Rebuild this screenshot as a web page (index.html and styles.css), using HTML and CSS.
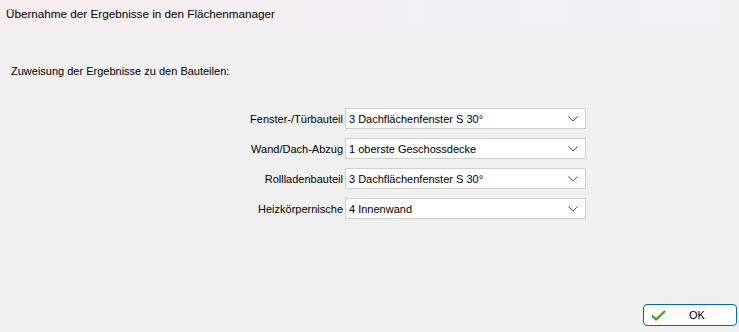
FILE: index.html
```html
<!DOCTYPE html>
<html lang="de">
<head>
  <meta charset="UTF-8">
  <title>Übernahme der Ergebnisse in den Flächenmanager</title>
  <link rel="stylesheet" href="styles.css">
</head>
<body>
  <div class="titlebar">Übernahme der Ergebnisse in den Flächenmanager</div>

  <div class="content">
    <p class="intro">Zuweisung der Ergebnisse zu den Bauteilen:</p>

    <div class="rows">
      <div class="row">
        <span class="label">Fenster-/Türbauteil</span>
        <div class="combo"><span>3 Dachflächenfenster S 30°</span><svg class="chev" width="10" height="6" viewBox="0 0 10 6"><path d="M0.5 0.5 L5 5 L9.5 0.5" fill="none" stroke="#555" stroke-width="1"/></svg></div>
      </div>
      <div class="row">
        <span class="label">Wand/Dach-Abzug</span>
        <div class="combo"><span>1 oberste Geschossdecke</span><svg class="chev" width="10" height="6" viewBox="0 0 10 6"><path d="M0.5 0.5 L5 5 L9.5 0.5" fill="none" stroke="#555" stroke-width="1"/></svg></div>
      </div>
      <div class="row">
        <span class="label">Rollladenbauteil</span>
        <div class="combo"><span>3 Dachflächenfenster S 30°</span><svg class="chev" width="10" height="6" viewBox="0 0 10 6"><path d="M0.5 0.5 L5 5 L9.5 0.5" fill="none" stroke="#555" stroke-width="1"/></svg></div>
      </div>
      <div class="row">
        <span class="label">Heizkörpernische</span>
        <div class="combo"><span>4 Innenwand</span><svg class="chev" width="10" height="6" viewBox="0 0 10 6"><path d="M0.5 0.5 L5 5 L9.5 0.5" fill="none" stroke="#555" stroke-width="1"/></svg></div>
      </div>
    </div>
  </div>

  <div class="footer">
    <button class="ok">
      <svg width="15" height="11" viewBox="0 0 15 11"><path d="M1 5.5 L5 9.5 L14 1" fill="none" stroke="#3c9a1f" stroke-width="2"/></svg>
      <span>OK</span>
    </button>
  </div>
</body>
</html>
```

FILE: styles.css
```css
body {
  margin: 0;
  width: 739px;
  height: 332px;
  background: #f0f0f0;
  font-family: "Liberation Sans", Arial, sans-serif;
  font-size: 11px;
  color: #000;
  display: flex;
  flex-direction: column;
  overflow: hidden;
}

.titlebar {
  height: 29px;
  line-height: 28px;
  padding-left: 6px;
  font-size: 11.7px;
  background: linear-gradient(90deg, #f9eded 0%, #f2f0f3 50%, #eff2f4 80%, #eef3f2 100%);
}

.content {
  flex: 1;
}

.intro {
  margin: 34px 0 0 11px;
  line-height: 16px;
}

.rows {
  display: flex;
  flex-direction: column;
  gap: 9px;
  margin-top: 29px;
}

.row {
  display: flex;
  align-items: center;
  height: 21px;
}

.label {
  width: 345px;
  text-align: right;
  padding-right: 2px;
  box-sizing: border-box;
}

.combo {
  width: 241px;
  height: 21px;
  box-sizing: border-box;
  background: #fff;
  border: 1px solid #d0d0d0;
  display: flex;
  align-items: center;
  justify-content: space-between;
  padding: 0 7px 0 3px;
}

.chev {
  display: block;
}

.footer {
  display: flex;
  justify-content: flex-end;
  padding: 0 2px 6px 0;
}

.ok {
  width: 94px;
  height: 22px;
  box-sizing: border-box;
  border: 1px solid #0067c0;
  border-radius: 4px;
  background: #fdfdfd;
  font: inherit;
  display: flex;
  align-items: center;
  padding: 0 0 0 7px;
}

.ok span {
  flex: 1;
  text-align: center;
  padding-right: 8px;
}
```
